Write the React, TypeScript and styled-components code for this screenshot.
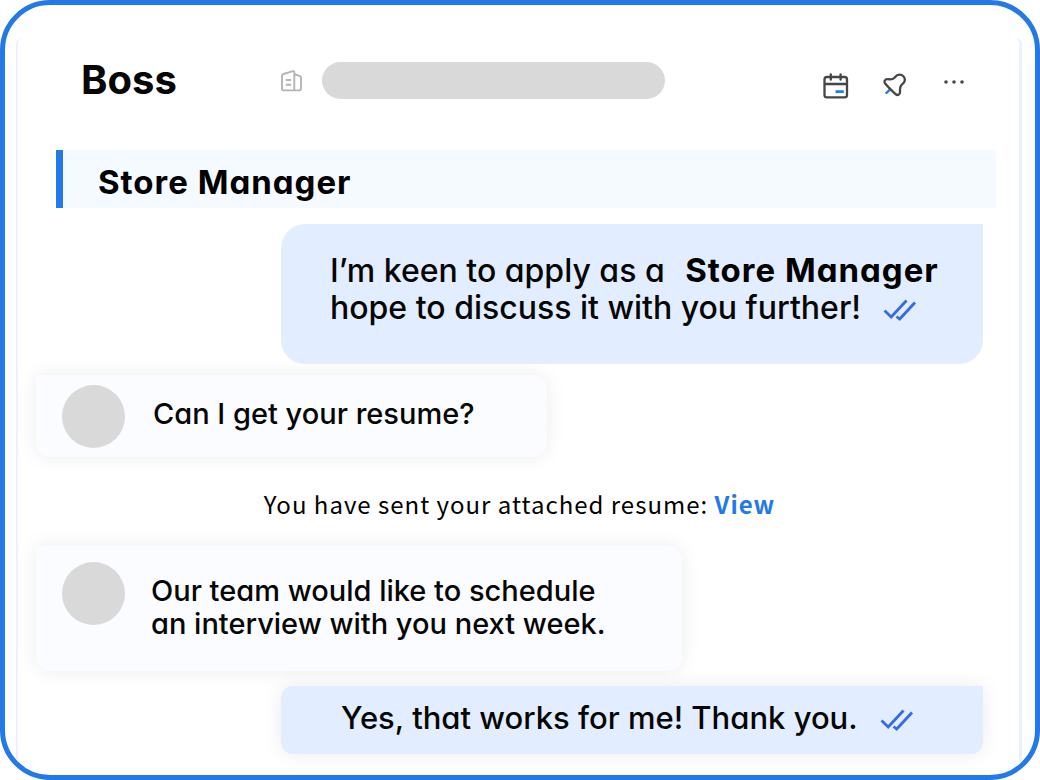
import React from "react";
import styled, { createGlobalStyle } from "styled-components";

const GlobalStyle = createGlobalStyle`
  * { box-sizing: border-box; }
  body {
    margin: 0;
    background: #fff;
    color: #060606;
    font-family: Inter, "Open Sans", sans-serif;
    font-feature-settings: "cv11";
  }
  h1, h2, p { margin: 0; }
`;

const Frame = styled.main`
  display: flex;
  min-height: 100vh;
  padding: 33px 13px 0 11px;
  border: 5px solid #2479e8;
  border-radius: 50px;
  overflow: hidden;
`;

const Panel = styled.div`
  flex: 1;
  min-width: 0;
  border-left: 2px solid #eef0ff;
  border-right: 3px solid #e8f2fe;
  border-radius: 6px 6px 0 0;
`;

const Header = styled.header`
  display: flex;
  align-items: center;
  height: 84px;
  padding: 0 47px 0 63px;
`;

const Name = styled.h1`
  width: 200px;
  font-size: 40px;
  line-height: 48px;
  font-weight: 700;
`;

const Company = styled.div`
  display: flex;
  flex: 1;
  align-items: center;
  gap: 20px;
`;

const Placeholder = styled.div`
  flex: 1;
  max-width: 343px;
  height: 37px;
  border-radius: 19px;
  background: #d9d9d9;
`;

const Actions = styled.div`
  display: flex;
  gap: 31px;
  padding-top: 13px;
`;

const IconButton = styled.button`
  display: flex;
  width: 29px;
  height: 28px;
  padding: 0;
  border: 0;
  background: none;
  cursor: pointer;
`;

const JobBar = styled.section`
  display: flex;
  align-items: center;
  height: 58px;
  margin: 28px 23px 0 38px;
  padding: 6px 35px 0;
  border-left: 7px solid #2479e8;
  background: #f4faff;
`;

const JobTitle = styled.h2`
  color: #000;
  font-size: 33px;
  line-height: 38px;
  font-weight: 700;
  letter-spacing: 1px;
`;

const Thread = styled.section`
  display: flex;
  flex-direction: column;
  padding: 16px 36px 21px 18px;
`;

const Sent = styled.article<{ $compact?: boolean }>`
  z-index: 1;
  display: flex;
  align-items: ${(p) => (p.$compact ? "center" : "flex-start")};
  min-height: ${(p) => (p.$compact ? 68 : 140)}px;
  margin: ${(p) => (p.$compact ? 15 : 0)}px 0 0 245px;
  padding: ${(p) => (p.$compact ? "0 40px 6px 60px" : "28px 20px 0 49px")};
  border-radius: ${(p) => (p.$compact ? "12px 0 12px 12px" : "24px 0 24px 24px")};
  background: #e2eeff;
  box-shadow: ${(p) => (p.$compact ? "0 0 20px rgba(0, 0, 0, 0.08)" : "none")};
`;

const Received = styled.article<{ $width: number; $tall?: boolean }>`
  display: flex;
  align-items: flex-start;
  gap: ${(p) => (p.$tall ? 26 : 28)}px;
  width: ${(p) => p.$width}px;
  max-width: 100%;
  min-height: ${(p) => (p.$tall ? 125 : 82)}px;
  padding: ${(p) => (p.$tall ? 16 : 10)}px 26px 9px;
  border-radius: 0 14px 14px 14px;
  background: #fbfcff;
  box-shadow: 0 0 20px rgba(0, 0, 0, 0.08);
`;

const FirstReceived = styled(Received)`
  margin-top: 11px;
`;

const Avatar = styled.div`
  flex: none;
  width: 63px;
  height: 63px;
  border-radius: 50%;
  background: #d9d9d9;
`;

const SentText = styled.p<{ $compact?: boolean }>`
  font-size: ${(p) => (p.$compact ? 31 : 32)}px;
  line-height: 37px;
  font-weight: 500;
`;

const ReceivedText = styled.p`
  padding-top: 12px;
  font-size: 29px;
  line-height: 33px;
  font-weight: 500;
`;

const Role = styled.strong`
  margin-left: 12px;
  color: #000;
  font-size: 33px;
  font-weight: 700;
  letter-spacing: 1px;
`;

const Ticks = styled.svg`
  margin-left: 22px;
  vertical-align: -2px;
`;

const Notice = styled.p`
  padding: 27px 0 23px 20px;
  color: #000;
  font-family: "Noto Sans CJK SC", sans-serif;
  font-size: 24px;
  line-height: 39px;
  letter-spacing: 1px;
  text-align: center;
`;

const ViewLink = styled.a`
  color: #2479e8;
  font-weight: 700;
  text-decoration: none;
`;

function DoubleTick() {
  return (
    <Ticks width="34" height="22" viewBox="0 0 34 22" fill="none" stroke="#356be6" strokeWidth="2.8" role="img" aria-label="Read">
      <path d="M1.5 11.5 8.2 18 23.5 1.5M13.5 17.500l3.2 2.500L32 3.500" />
    </Ticks>
  );
}

function BuildingIcon() {
  return (
    <svg width="21" height="26" viewBox="0 0 21 26" fill="none" stroke="#b5b5b5" strokeWidth="1.9" strokeLinejoin="round" aria-hidden="true">
      <path d="M13.3 23.4V5.2Q13.3 3.8 12 4.2L2.6 7Q1 7.5 1 9v12.4q0 2 2 2h15q2 0 2-2V11q0-1.3-1.2-1.8L13.3 7M4.8 13h5.4M4.8 17.8h5.4" />
    </svg>
  );
}

function CalendarIcon() {
  return (
    <svg width="26" height="26" viewBox="0 0 26 26" fill="none" stroke="#464646" strokeWidth="2.3" strokeLinecap="round" aria-hidden="true">
      <rect x="1.5" y="4" width="22.5" height="20.4" rx="2.4" />
      <path d="M2 11h21.5M7.8 1.3v5.4M17.6 1.3v5.4" />
      <path d="M12.5 18.7h8.3" stroke="#2479f0" strokeWidth="2.8" strokeLinecap="butt" />
    </svg>
  );
}

function PinIcon() {
  return (
    <svg width="24" height="26" viewBox="0 0 24 26" fill="none" strokeWidth="2.3" strokeLinejoin="round" aria-hidden="true">
      <path d="M8 15.5 2.7 20.6" stroke="#2479f0" strokeWidth="2.4" />
      <path d="M2 10.2C.8 8.3 2 6.3 4.3 6.2c2.7-.1 5 .8 6.9-1.2 1.5-1.7 2.4-3.4 5.2-3.4 3.1 0 5.8 2.5 5.4 5.7-.4 2.8-2.2 3.3-3.7 5.1-1.6 2-.9 4.1-1.1 6.8-.1 2.6-2.2 3.5-4.2 2.1C9 17.8 5.2 14.3 2 10.2Z" stroke="#464646" />
    </svg>
  );
}

function MoreIcon() {
  return (
    <svg width="22" height="26" viewBox="0 0 22 26" fill="#464646" aria-hidden="true">
      <circle cx="3" cy="9" r="1.8" />
      <circle cx="11" cy="9" r="1.8" />
      <circle cx="19" cy="9" r="1.8" />
    </svg>
  );
}

export default function App() {
  return (
    <>
      <GlobalStyle />
      <Frame>
        <Panel>
          <Header>
            <Name>Boss</Name>
            <Company>
              <BuildingIcon />
              <Placeholder />
            </Company>
            <Actions>
              <IconButton aria-label="Schedule"><CalendarIcon /></IconButton>
              <IconButton aria-label="Pin"><PinIcon /></IconButton>
              <IconButton aria-label="More"><MoreIcon /></IconButton>
            </Actions>
          </Header>
          <JobBar>
            <JobTitle>Store Manager</JobTitle>
          </JobBar>
          <Thread>
            <Sent>
              <SentText>
                I’m keen to apply as a <Role>Store Manager</Role>
                <br />
                hope to discuss it with you further!
                <DoubleTick />
              </SentText>
            </Sent>
            <FirstReceived $width={511}>
              <Avatar />
              <ReceivedText>Can I get your resume?</ReceivedText>
            </FirstReceived>
            <Notice>
              You have sent your attached resume: <ViewLink href="#resume">View</ViewLink>
            </Notice>
            <Received $width={646} $tall>
              <Avatar />
              <ReceivedText>
                Our team would like to schedule
                <br />
                an interview with you next week.
              </ReceivedText>
            </Received>
            <Sent $compact>
              <SentText $compact>
                Yes, that works for me! Thank you.
                <DoubleTick />
              </SentText>
            </Sent>
          </Thread>
        </Panel>
      </Frame>
    </>
  );
}
